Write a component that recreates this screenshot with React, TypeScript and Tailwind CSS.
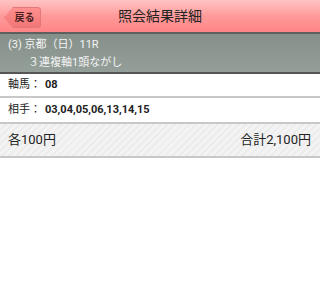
import React from "react";

const font = { fontFamily: '"Roboto", "Noto Sans CJK JP", sans-serif' };

function Header() {
  return (
    <div className="relative flex h-[34px] items-center justify-center border-b-2 border-[#5f5f5f] bg-gradient-to-b from-[#ffc4c4] via-[#ff9a9a] to-[#ff8585]">
      <button className="absolute left-[4px] top-[7px] flex h-[21px] w-[37px] items-center justify-center rounded-[3px] border border-[#e07a7a] bg-gradient-to-b from-[#ff8f8f] to-[#f27676] pl-[4px] text-[10px] font-bold text-[#4a1f1f] [clip-path:polygon(9px_0,100%_0,100%_100%,9px_100%,0_50%)]">
        戻る
      </button>
      <h1 className="text-[14px] text-[#222]">照会結果詳細</h1>
    </div>
  );
}

export default function App() {
  return (
    <div className="h-[293px] w-[320px] bg-white" style={font}>
      <Header />
      <div className="border-b-2 border-[#555] bg-gradient-to-b from-[#86908a] to-[#949f99] px-[8px] pt-[2px] pb-[0px] text-[11px] leading-[18px] text-[#f4f4f4]">
        <div>(3) 京都（日）11R</div>
        <div className="pl-[20px]">３連複軸1頭ながし</div>
      </div>
      <div className="flex h-[24px] items-center border-b-2 border-[#c8c8c8] px-[8px] text-[11px] text-[#222]">
        <span>軸馬：</span>
        <span className="ml-[4px] font-bold">08</span>
      </div>
      <div className="flex h-[26px] items-center border-b-2 border-[#c8c8c8] px-[8px] text-[11px] text-[#222]">
        <span>相手：</span>
        <span className="ml-[4px] font-bold">03,04,05,06,13,14,15</span>
      </div>
      <div className="flex h-[34px] items-center justify-between border-b-2 border-[#c8c8c8] bg-[repeating-linear-gradient(135deg,#f3f3f3_0px,#f3f3f3_3px,#ececec_3px,#ececec_5px)] px-[8px] text-[13px] text-[#222]">
        <span>各100円</span>
        <span className="mr-[1px]">合計2,100円</span>
      </div>
    </div>
  );
}
